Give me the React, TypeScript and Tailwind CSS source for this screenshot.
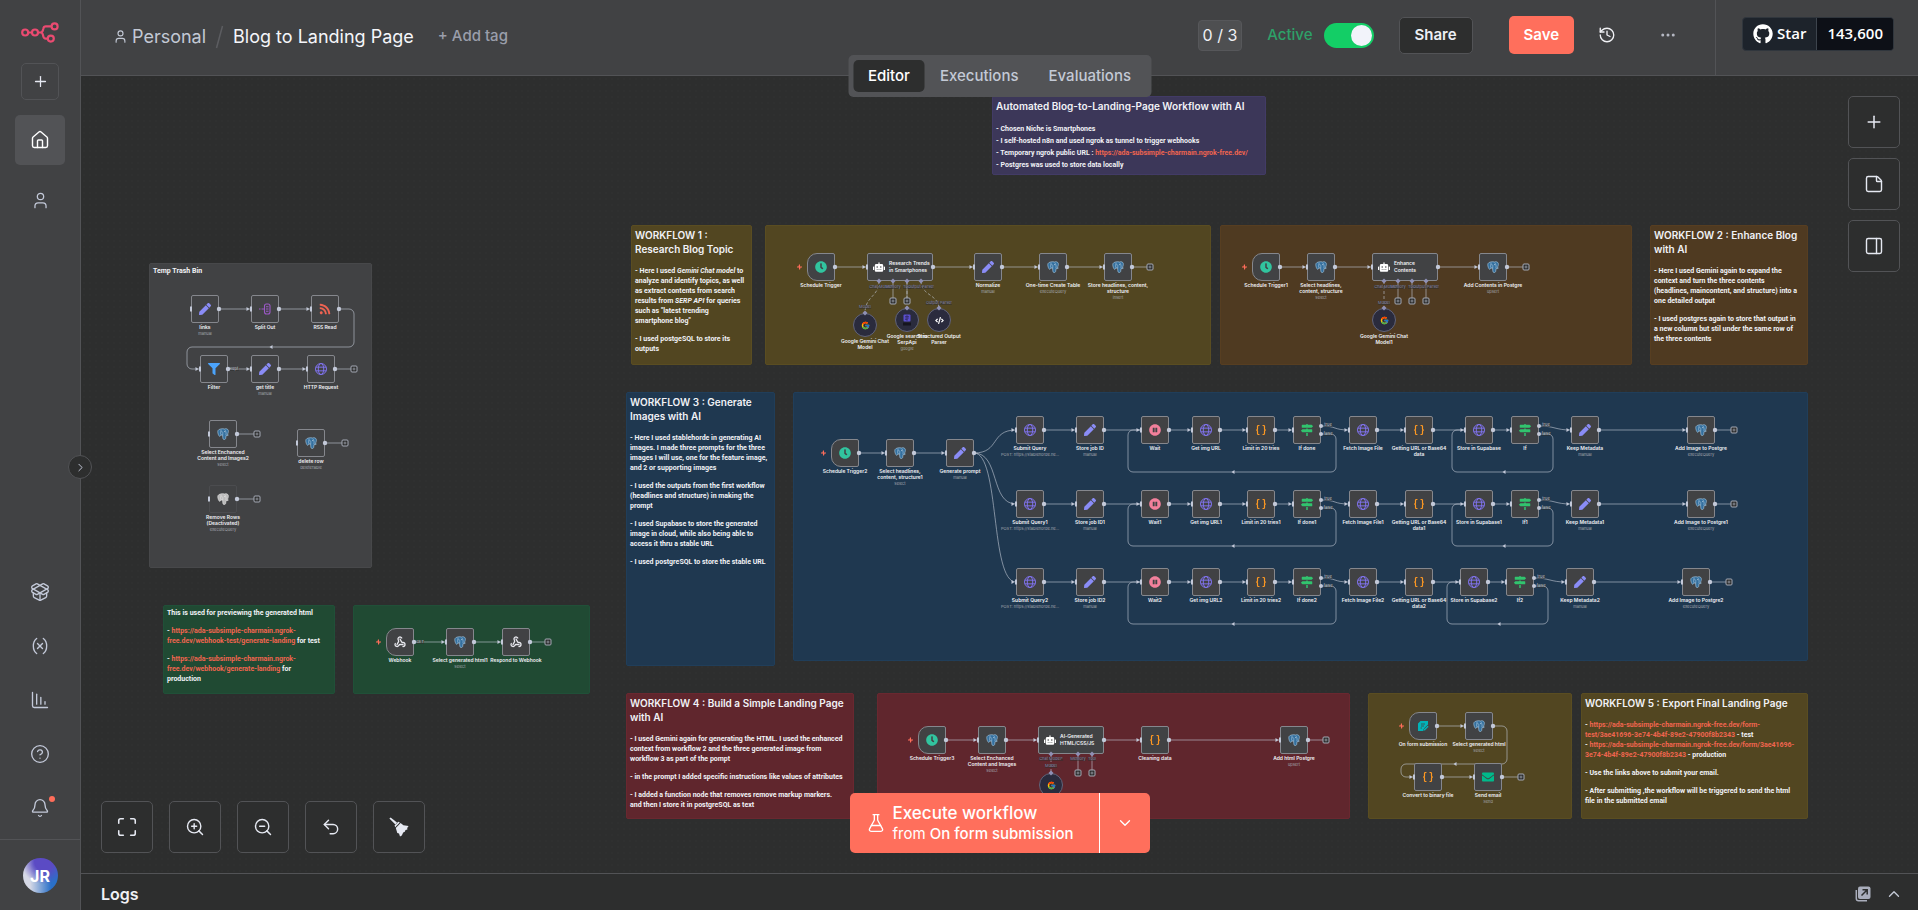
import React from "react";
import {
  Bell, ChartColumnDecreasing, ChevronDown, ChevronRight, ChevronUp, CircleQuestionMark, Ellipsis,
  FlaskConical, History, House, Maximize, PackageOpen, PanelRight, Plus, StickyNote, Undo2, User,
  Variable, Webhook, ZoomIn, ZoomOut, Braces,
} from "lucide-react";
import { FaClock, FaCode, FaEnvelope, FaFilter, FaGithub, FaMapSigns, FaPauseCircle, FaPen, FaRobot, FaRss } from "react-icons/fa";
import { FcGoogle } from "react-icons/fc";

/* ---------- icons drawn by hand ---------- */

function N8nLogo() {
  return (
    <svg width="38" height="22" viewBox="0 0 38 22" fill="none" stroke="#ea4b71" strokeWidth="2.2" aria-hidden="true">
      <circle cx="4.2" cy="10.5" r="3" />
      <circle cx="14" cy="10.5" r="3" />
      <circle cx="33.6" cy="4.4" r="3" />
      <circle cx="29.8" cy="16.6" r="3" />
      <path d="M7.2 10.5h3.8M17 10.5h2.4c1.6 0 2.2-.8 2.5-2.2l.4-1.6c.3-1.500 1-2.300 2.500-2.300h5.800M19.400 10.500c1.600 0 2.200.9 2.500 2.200l.4 1.700c.3 1.500 1 2.200 2.500 2.200h2" />
    </svg>
  );
}

function Broom() {
  return (
    <svg width="20" height="20" viewBox="0 0 20 20" fill="#e6e9f2" aria-hidden="true">
      <path d="M0.400 1.600 1.600.4 8 5.600 6.400 7.400z" />
      <path d="M5.600 8.600 9.200 4.800l1.600.6-4.600 4.800z" />
      <path d="M6.800 11 11.600 6l2.800 2.200 5.200.9-1.400 2 .2 1.300-1.900.6-.7 1.800-1.600.7-1.400 3-1.800 1-1-3-1.700-.4z" />
    </svg>
  );
}

function PopOut() {
  return (
    <svg width="16" height="16" viewBox="0 0 16 16" aria-hidden="true">
      <path d="M1.300 4v8.400c0 1.300.9 2.300 2.300 2.300H12" fill="none" stroke="#a9adbb" strokeWidth="1.500" />
      <rect x="3" y="0.500" width="12.500" height="12.500" rx="2" fill="#a9adbb" />
      <path d="M6.500 9.500 12 4M7.500 3.700H12.200V8.500" fill="none" stroke="#2d2e2e" strokeWidth="1.500" />
    </svg>
  );
}

function Elephant({ off }: { off?: boolean }) {
  const body = off ? "#b9b9b9" : "#336f9e";
  const line = off ? "#e4e4e4" : "#a9c6dd";
  return (
    <svg width="12" height="12" viewBox="0 0 24 24" fill="none" stroke={line} strokeWidth="1.300" strokeLinejoin="round">
      <path d="M3.500 3.500C1 5 1.200 8.500 2.500 12.500s3 5 4.200 3.500l1.600-2 3 .4c.3 2.600-.1 5.600.8 7.400 1.300 2 4.600 1.500 5.200-.8.500-2 .3-4 .6-5.700 2 .3 3.800-.1 4.800-1.200l-2.200-.6c1.800-3 2.700-6.500 2-9C21.500 1.500 17.500.800 14.800 2 11 .8 6 1.800 3.500 3.500z" fill={body} />
      <path d="M8.300 14c-1.600-2.600-1.500-6 .2-10.500M15.500 3.500c2.300 2.500 3.300 6.500 2.300 10.300M11.400 14.400c-.2-2.500.6-4 .2-6" />
      <path d="M9 7.500h1.600M14.500 7.200h1.600" stroke="#ffffff" />
    </svg>
  );
}

function GlobeGrid() {
  return (
    <svg width="12" height="12" viewBox="0 0 24 24" fill="none" stroke="#8073ee" strokeWidth="2">
      <circle cx="12" cy="12" r="11" />
      <ellipse cx="12" cy="12" rx="5.500" ry="11" />
      <path d="M1.500 8.300h21M1.500 15.700h21" />
    </svg>
  );
}

function SplitOut() {
  return (
    <svg width="12" height="12" viewBox="0 0 24 24" fill="none" stroke="#9b59c6" strokeWidth="2.200">
      <path d="M0 12h3M5 12h5" />
      <rect x="11" y="2" width="11" height="20" rx="4" />
      <path d="M14 7.500h5M14 12h5M14 16.500h5" />
    </svg>
  );
}

function FormDoc() {
  return (
    <svg width="12" height="12" viewBox="0 0 24 24">
      <path d="M7 2h15v7l-7 7v3l-2 3H2V7z" fill="#00b3b8" />
      <path d="M8 8h8M8 12h6M7 16h3" stroke="#414244" strokeWidth="1.600" />
      <path d="m13 19 8-8 2.500 2.500-8 8h-2.500z" fill="#00b3b8" stroke="#414244" strokeWidth="1" />
    </svg>
  );
}

function Serp() {
  return (
    <svg width="12" height="12" viewBox="0 0 24 24">
      <rect x="5" y="1" width="14" height="14" rx="2" fill="#5a4fcf" />
      <path d="M8 5h8M8 8h8M8 11h5M12 2v12" stroke="#2a2450" strokeWidth="1.200" />
      <rect x="4" y="17" width="16" height="6" fill="#15151f" />
    </svg>
  );
}

type IconName =
  | "pen" | "split" | "rss" | "filter" | "globe" | "pg" | "pgOff" | "clock" | "robot" | "google" | "serp"
  | "code" | "braces" | "if" | "pause" | "form" | "mail" | "hook";

const ICONS: Record<IconName, React.ReactNode> = {
  pen: <FaPen className="size-3 text-[#8a8cf6]" />,
  split: <SplitOut />,
  rss: <FaRss className="size-3 text-[#ee6352]" />,
  filter: <FaFilter className="size-3 text-[#4ba3fb]" />,
  globe: <GlobeGrid />,
  pg: <Elephant />,
  pgOff: <Elephant off />,
  clock: <FaClock className="size-3 text-[#31c49f]" />,
  robot: <FaRobot className="size-3 shrink-0 text-white" />,
  google: <FcGoogle className="size-[9px]" />,
  serp: <Serp />,
  code: <FaCode className="size-[9px] text-white" />,
  braces: <Braces className="size-3 text-[#ff9922]" strokeWidth={2.4} />,
  if: <FaMapSigns className="size-3 text-[#31c46e]" />,
  pause: <FaPauseCircle className="size-3 text-[#f2809b]" />,
  form: <FormDoc />,
  mail: <FaEnvelope className="size-3 text-[#00b98b]" />,
  hook: <Webhook className="size-3 text-[#e8e8ee]" strokeWidth={2.6} />,
};

/* ---------- workflow data, in canvas units ---------- */

type Kind = "node" | "trigger" | "agent" | "model";
type FlowNode = { x: number; y: number; icon: IconName; label: string; sub?: string; kind?: Kind; w?: number };

const half = (n: FlowNode) => (n.w ?? 28) / 2;

const imageRow = (y: number, n: string, shift: number): FlowNode[] => [
  { x: 1030, y, icon: "globe", label: "Submit Query" + n, sub: "POST: https://stablehorde.ne..." },
  { x: 1090, y, icon: "pen", label: "Store job ID" + n, sub: "manual" },
  { x: 1155, y, icon: "pause", label: "Wait" + n },
  { x: 1206, y, icon: "globe", label: "Get img URL" + n },
  { x: 1261, y, icon: "braces", label: "Limit in 20 tries" + n },
  { x: 1307, y, icon: "if", label: "If done" + n },
  { x: 1363, y, icon: "globe", label: "Fetch Image File" + n },
  { x: 1419, y, icon: "braces", label: "Getting URL or Base64\ndata" + n },
  { x: 1479 - shift, y, icon: "globe", label: "Store in Supabase" + n },
  { x: 1525 - shift, y, icon: "if", label: "If" + n },
  { x: 1585 - shift, y, icon: "pen", label: "Keep Metadata" + n, sub: "manual" },
  { x: 1701 - shift, y, icon: "pg", label: "Add Image to Postgre" + n, sub: "executeQuery" },
];

const CHAINS: { nodes: FlowNode[]; lone?: boolean; plus?: number }[] = [
  { lone: true, nodes: [
    { x: 205, y: 309, icon: "pen", label: "links", sub: "manual" },
    { x: 265, y: 309, icon: "split", label: "Split Out" },
    { x: 325, y: 309, icon: "rss", label: "RSS Read" },
  ] },
  { plus: 354, nodes: [
    { x: 214, y: 369, icon: "filter", label: "Filter" },
    { x: 265, y: 369, icon: "pen", label: "get title", sub: "manual" },
    { x: 321, y: 369, icon: "globe", label: "HTTP Request" },
  ] },
  { lone: true, plus: 257, nodes: [{ x: 223, y: 434, icon: "pg", label: "Select Enchanced\nContent and Images2", sub: "select" }] },
  { lone: true, plus: 345, nodes: [{ x: 311, y: 443, icon: "pg", label: "delete row", sub: "deleteTable" }] },
  { lone: true, plus: 257, nodes: [{ x: 223, y: 499, icon: "pgOff", label: "Remove Rows\n(Deactivated)", sub: "executeQuery" }] },
  { plus: 548, nodes: [
    { x: 400, y: 642, icon: "hook", label: "Webhook", kind: "trigger" },
    { x: 460, y: 642, icon: "pg", label: "Select generated html1", sub: "select" },
    { x: 516, y: 642, icon: "hook", label: "Respond to Webhook" },
  ] },
  { plus: 1150, nodes: [
    { x: 821, y: 267, icon: "clock", label: "Schedule Trigger", kind: "trigger" },
    { x: 900, y: 267, icon: "robot", label: "Research Trends\nin Smartphones", kind: "agent", w: 66 },
    { x: 988, y: 267, icon: "pen", label: "Normalize", sub: "manual" },
    { x: 1053, y: 267, icon: "pg", label: "One-time Create Table", sub: "executeQuery" },
    { x: 1118, y: 267, icon: "pg", label: "Store headlines, content,\nstructure", sub: "insert" },
  ] },
  { plus: 1526, nodes: [
    { x: 1266, y: 267, icon: "clock", label: "Schedule Trigger1", kind: "trigger" },
    { x: 1321, y: 267, icon: "pg", label: "Select headlines,\ncontent, structure", sub: "select" },
    { x: 1405, y: 267, icon: "robot", label: "Enhance\nContents", kind: "agent", w: 66 },
    { x: 1493, y: 267, icon: "pg", label: "Add Contents in Postgre", sub: "upsert" },
  ] },
  { nodes: [
    { x: 845, y: 453, icon: "clock", label: "Schedule Trigger2", kind: "trigger" },
    { x: 900, y: 453, icon: "pg", label: "Select headlines,\ncontent, structure1", sub: "select" },
    { x: 960, y: 453, icon: "pen", label: "Generate prompt", sub: "manual" },
  ] },
  { plus: 1734, nodes: imageRow(430, "", 0) },
  { plus: 1734, nodes: imageRow(504, "1", 0) },
  { plus: 1729, nodes: imageRow(582, "2", 5) },
  { plus: 1326, nodes: [
    { x: 932, y: 740, icon: "clock", label: "Schedule Trigger3", kind: "trigger" },
    { x: 992, y: 740, icon: "pg", label: "Select Enchanced\nContent and Images", sub: "select" },
    { x: 1071, y: 740, icon: "robot", label: "AI-Generated\nHTML/CSS/JS", kind: "agent", w: 66 },
    { x: 1155, y: 740, icon: "braces", label: "Cleaning data" },
    { x: 1294, y: 740, icon: "pg", label: "Add html Postgre", sub: "upsert" },
  ] },
  { nodes: [
    { x: 1423, y: 726, icon: "form", label: "On form submission", kind: "trigger" },
    { x: 1479, y: 726, icon: "pg", label: "Select generated html", sub: "select" },
  ] },
  { plus: 1521, nodes: [
    { x: 1428, y: 777, icon: "braces", label: "Convert to binary file" },
    { x: 1488, y: 777, icon: "mail", label: "Send email", sub: "Send" },
  ] },
];

const ROWS: [number, number][] = [[430, 0], [504, 0], [582, 5]];

const MODELS: FlowNode[] = [
  { x: 865, y: 325, icon: "google", label: "Google Gemini Chat\nModel", kind: "model" },
  { x: 907, y: 320, icon: "serp", label: "Google search in\nSerpApi", sub: "google", kind: "model" },
  { x: 939, y: 320, icon: "code", label: "Structured Output\nParser", kind: "model" },
  { x: 1384, y: 320, icon: "google", label: "Google Gemini Chat\nModel1", kind: "model" },
  { x: 1051, y: 785, icon: "google", label: "", kind: "model" },
];

const PORTS: [number, number][] = [
  [879, 281], [893, 281], [907, 281], [921, 281],
  [1384, 281], [1398, 281], [1412, 281], [1426, 281],
  [1051, 754], [1078, 754], [1092, 754],
];
const SUB_PLUS: [number, number, number][] = [
  [893, 281, 301], [907, 281, 301],
  [1398, 281, 301], [1412, 281, 301], [1426, 281, 301],
  [1078, 754, 773], [1092, 754, 773],
];
const TAGS: [number, number, string][] = [
  [881, 287, "Chat Model*"], [893, 287, "Memory"], [907, 287, "Tool"], [921, 287, "Output Parser"],
  [865, 307, "Model"], [939, 303, "Output Parser"],
  [1386, 287, "Chat Model*"], [1398, 287, "Memory"], [1412, 287, "Tool"], [1426, 287, "Output Parser"],
  [1384, 303, "Model"],
  [1051, 759, "Chat Model*"], [1078, 759, "Memory"], [1092, 759, "Tool"], [1051, 766, "Model"],
];
const LOOPS: { d: string; mid: [number, number] }[] = [
  { d: "M339 309H349a5 5 0 0 1 5 5V342a5 5 0 0 1-5 5H192a5 5 0 0 0-5 5V364a5 5 0 0 0 5 5H200", mid: [271, 347] },
  { d: "M1493 726H1502a5 5 0 0 1 5 5V759a5 5 0 0 1-5 5H1406a5 5 0 0 0-5 5V772a5 5 0 0 0 5 5H1414", mid: [1455, 764] },
  ...ROWS.flatMap(([y, s]) => [
    { d: `M1321 ${y + 4}H1331a5 5 0 0 1 5 5V${y + 37}a5 5 0 0 1-5 5H1133a5 5 0 0 1-5-5V${y + 5}a5 5 0 0 1 5-5H1141`, mid: [1233, y + 42] as [number, number] },
    { d: `M${1539 - s} ${y + 4}H${1548 - s}a5 5 0 0 1 5 5V${y + 37}a5 5 0 0 1-5 5H${1457 - s}a5 5 0 0 1-5-5V${y + 5}a5 5 0 0 1 5-5H${1465 - s}`, mid: [1504 - s, y + 42] as [number, number] },
  ]),
];

/* ---------- canvas parts ---------- */

function InputHandle({ x, y, arrow }: { x: number; y: number; arrow: boolean }) {
  return (
    <g fill="#c3c9d9">
      {arrow && <path d={`M${x - 4.5} ${y - 2}l3 2l-3 2z`} />}
      <rect x={x - 1} y={y - 2.5} width="2" height="5" />
    </g>
  );
}

function PlusBox({ x, y }: { x: number; y: number }) {
  return (
    <g stroke="#a6aab6" fill="#2d2e2e">
      <rect x={x - 3} y={y - 3} width="6" height="6" rx="1" strokeWidth="1" />
      <path d={`M${x - 1.5} ${y}h3M${x} ${y - 1.5}v3`} strokeWidth="0.700" />
    </g>
  );
}

function Wires() {
  return (
    <svg className="absolute inset-0 h-full w-full overflow-visible" aria-hidden="true">
      <g fill="none" stroke="#c3c9d5" strokeOpacity="0.600" strokeWidth="1">
        {CHAINS.map((c, i) =>
          c.nodes.map((a, j) => {
            const b = c.nodes[j + 1];
            const x1 = a.x + half(a);
            if (!b) return c.plus ? <path key={`${i}-${j}`} d={`M${x1} ${a.y}H${c.plus}`} /> : null;
            const x2 = b.x - half(b);
            return a.icon === "if" ? (
              <path key={`${i}-${j}`} d={`M${x1} ${a.y - 4}C${x1 + 16} ${a.y - 4} ${x2 - 16} ${b.y} ${x2} ${b.y}`} />
            ) : (
              <path key={`${i}-${j}`} d={`M${x1} ${a.y}H${x2}`} />
            );
          })
        )}
        {LOOPS.map((l) => <path key={l.d} d={l.d} />)}
        {ROWS.map(([y]) => <path key={y} d={`M974 453C1000 453 990 ${y} 1016 ${y}`} />)}
        {SUB_PLUS.map(([x, y1, y2]) => <path key={`${x}-${y1}`} d={`M${x} ${y1}V${y2}`} />)}
        <g strokeDasharray="3 2">
          <path d="M879 281C879 297 865 296 865 313" />
          <path d="M907 281V309" />
          <path d="M921 281C921 296 939 294 939 309" />
          <path d="M1384 281V309" />
          <path d="M1051 754V774" />
        </g>
      </g>
      {LOOPS.map((l) => (
        <path key={l.d} d={`M${l.mid[0] + 1.5} ${l.mid[1] - 2}l-3 2l3 2z`} fill="#c3c9d9" />
      ))}
    </svg>
  );
}

function Handles() {
  return (
    <svg className="pointer-events-none absolute inset-0 h-full w-full overflow-visible" aria-hidden="true">
      {CHAINS.map((c) =>
        c.nodes.map((n, j) => (
          <g key={`${n.x}-${n.y}`} fill="#c3c9d9">
            {n.kind !== "trigger" && <InputHandle x={n.x - half(n)} y={n.y} arrow={!(c.lone && j === 0)} />}
            {n.icon === "if" ? (
              <>
                <circle cx={n.x + half(n)} cy={n.y - 4} r="2" />
                <circle cx={n.x + half(n)} cy={n.y + 4} r="2" />
              </>
            ) : (
              <circle cx={n.x + half(n)} cy={n.y} r="2.200" />
            )}
            {n.kind === "trigger" && (
              <path d={`M${n.x - 21} ${n.y - 2.5}v2h2v1h-1.500l-.5 2h-1v-2h-2v-1h1.500l.5-2z`} fill="#ff6d5a" />
            )}
          </g>
        ))
      )}
      {CHAINS.map((c, i) => (c.plus ? <PlusBox key={i} x={c.plus} y={c.nodes[0].y} /> : null))}
      {SUB_PLUS.map(([x, , y]) => <PlusBox key={`${x}-${y}`} x={x} y={y} />)}
      {[...PORTS, ...MODELS.map((m) => [m.x, m.y - 12] as [number, number])].map(([x, y]) => (
        <path key={`${x}-${y}`} d={`M${x} ${y - 2.5}l2.500 2.500l-2.500 2.500l-2.500-2.500z`} fill="#8f90b5" />
      ))}
    </svg>
  );
}

function Label({ n }: { n: FlowNode }) {
  return (
    <div className="absolute top-full left-1/2 flex -translate-x-1/2 flex-col items-center pt-[2px] text-center whitespace-pre">
      <span className="text-[5px] leading-[6px] font-semibold text-[#f0f1f5]">{n.label}</span>
      {n.sub && <span className="text-[4px] leading-[7px] text-[#a3a6ae]">{n.sub}</span>}
    </div>
  );
}

function NodeCard({ n }: { n: FlowNode }) {
  const w = n.kind === "model" ? 24 : n.w ?? 28;
  const h = n.kind === "model" ? 24 : 28;
  const pos = { left: n.x - w / 2, top: n.y - h / 2, width: w, height: h };
  if (n.kind === "agent")
    return (
      <div className="absolute flex items-center gap-1 rounded-[2px] border border-[#85878d] bg-[#414244] pl-[5px]" style={pos}>
        {ICONS[n.icon]}
        <span className="text-[5px] leading-[7px] font-semibold whitespace-pre text-[#f0f1f5]">{n.label}</span>
      </div>
    );
  const shape =
    n.kind === "model"
      ? "rounded-full border-[#62647a] bg-[#2a2b3d]"
      : n.kind === "trigger"
        ? "rounded-l-[10px] rounded-r-[2px] border-[#85878d] bg-[#414244]"
        : n.icon === "pgOff"
          ? "rounded-[2px] border-[#4b4c4f] bg-[#414244]"
          : "rounded-[2px] border-[#85878d] bg-[#414244]";
  return (
    <div className={"absolute flex items-center justify-center border " + shape} style={pos}>
      {ICONS[n.icon]}
      <Label n={n} />
    </div>
  );
}

function A({ lines }: { lines: string[] }) {
  return (
    <a href={lines.join("")} className="text-[#f0654f]">
      {lines.map((l, i) => (
        <React.Fragment key={l}>{i > 0 && <br />}{l}</React.Fragment>
      ))}
    </a>
  );
}

type NoteProps = { x: number; y: number; w: number; h: number; tone: string; title?: string; children?: React.ReactNode };

function Note({ x, y, w, h, tone, title, children }: NoteProps) {
  return (
    <section
      className={"absolute flex flex-col gap-2 rounded-[2px] border px-[3px] pt-[2px] font-['Roboto','Inter',sans-serif] text-[7px] leading-[10px] font-bold whitespace-nowrap text-[#f1f2f6] " + tone}
      style={{ left: x, top: y, width: w, height: h }}
    >
      {title && <h2 className="mb-[2px] font-['Inter',sans-serif] text-[10px] leading-[14px] font-semibold whitespace-pre">{title}</h2>}
      {children}
    </section>
  );
}

const OLIVE = "bg-[#524621] border-[#5a4d21]";
const BROWN = "bg-[#4f3a21] border-[#573e21]";
const NAVY = "bg-[#1f3850] border-[#203e5a]";
const WINE = "bg-[#60262d] border-[#6a2830]";
const GREEN = "bg-[#204a33] border-[#205038]";
const VIOLET = "bg-[#3c3759] border-[#423b66]";
const GREY = "bg-[#414244] border-[#47484a]";

function Notes() {
  return (
    <>
      <Note x={992} y={96} w={274} h={79} tone={VIOLET} title="Automated Blog-to-Landing-Page Workflow with AI">
        <p className="leading-[12px]">
          - Chosen Niche is Smartphones<br />
          - I self-hosted n8n and used ngrok as tunnel to trigger webhooks<br />
          - Temporary ngrok public URL : <A lines={["https://ada-subsimple-charmain.ngrok-free.dev/"]} /><br />
          - Postgres was used to store data locally
        </p>
      </Note>

      <Note x={149} y={263} w={223} h={305} tone={GREY}><p>Temp Trash Bin</p></Note>

      <Note x={631} y={225} w={121} h={140} tone={OLIVE} title={"WORKFLOW 1 :\nResearch Blog Topic"}>
        <p>- Here I used <em>Gemini Chat model</em> to<br />analyze and identify topics, as well<br />as extract contents from search<br />results from <em>SERP API</em> for queries<br />such as "latest trending<br />smartphone blog"</p>
        <p>- I used postgeSQL to store its<br />outputs</p>
      </Note>
      <Note x={765} y={225} w={446} h={140} tone={OLIVE} />
      <Note x={1220} y={225} w={412} h={140} tone={BROWN} />
      <Note x={1650} y={225} w={158} h={140} tone={BROWN} title={"WORKFLOW 2 : Enhance Blog\nwith AI"}>
        <p>- Here I used Gemini again to expand the<br />context and turn the three contents<br />(headlines, maincontent, and structure) into a<br />one detailed output</p>
        <p>- I used postgres again to store that output in<br />a new column but stil under the same row of<br />the three contents</p>
      </Note>

      <Note x={626} y={392} w={149} h={274} tone={NAVY} title={"WORKFLOW 3 : Generate\nImages with AI"}>
        <p>- Here I used stablehorde in generating AI<br />images. I made three prompts for the three<br />images I will use, one for the feature image,<br />and 2 or supporting images</p>
        <p>- I used the outputs from the first workflow<br />(headlines and structure) in making the<br />prompt</p>
        <p>- I used Supabase to store the generated<br />image in cloud, while also being able to<br />access it thru a stable URL</p>
        <p>- I used postgreSQL to store the stable URL</p>
      </Note>
      <Note x={793} y={392} w={1015} h={269} tone={NAVY} />

      <Note x={163} y={605} w={172} h={89} tone={GREEN}>
        <p>This is used for previewing the generated html</p>
        <p>- <A lines={["https://ada-subsimple-charmain.ngrok-", "free.dev/webhook-test/generate-landing"]} /> for test</p>
        <p>- <A lines={["https://ada-subsimple-charmain.ngrok-", "free.dev/webhook/generate-landing"]} /> for<br />production</p>
      </Note>
      <Note x={353} y={605} w={237} h={89} tone={GREEN} />

      <Note x={626} y={693} w={228} h={126} tone={WINE} title={"WORKFLOW 4 : Build a Simple Landing Page\nwith AI"}>
        <p>- I used Gemini again for generating the HTML. I used the enhanced<br />context from workflow 2 and the three generated image from<br />workflow 3 as part of the pompt</p>
        <p>- in the prompt I added specific instructions like values of attributes</p>
        <p>- I added a function node that removes remove markup markers.<br />and then I store it in postgreSQL as text</p>
      </Note>
      <Note x={877} y={693} w={473} h={126} tone={WINE} />

      <Note x={1368} y={693} w={204} h={126} tone={OLIVE} />
      <Note x={1581} y={693} w={227} h={126} tone={OLIVE} title="WORKFLOW 5 : Export Final Landing Page">
        <p>- <A lines={["https://ada-subsimple-charmain.ngrok-free.dev/form-", "test/3ae41696-3e74-4b4f-89e2-47900f8b2343"]} /> - test<br />- <A lines={["https://ada-subsimple-charmain.ngrok-free.dev/form/3ae41696-", "3e74-4b4f-89e2-47900f8b2343"]} /> - production</p>
        <p>- Use the links above to submit your email.</p>
        <p>- After submitting ,the workflow will be triggered to send the html<br />file in the submitted email</p>
      </Note>
    </>
  );
}

const WIRE_LABELS: [number, number, string][] = [
  [234, 369, "Kept"], [420, 642, "GET"],
  ...ROWS.flatMap(([y, s]) => [
    [1328, y - 5, "true"], [1328, y + 4, "false"], [1546 - s, y - 5, "true"], [1546 - s, y + 4, "false"],
  ] as [number, number, string][]),
];

function Canvas() {
  return (
    <div className="absolute -top-[76px] -left-[81px] h-[910px] w-[1918px]">
      <Notes />
      <Wires />
      {[...CHAINS.flatMap((c) => c.nodes), ...MODELS].map((n) => <NodeCard key={`${n.x}-${n.y}`} n={n} />)}
      {TAGS.map(([x, y, t]) => (
        <span key={`${x}-${y}`} className="absolute -translate-x-1/2 -translate-y-1/2 bg-[#2d2e2e]/50 text-[4px] leading-[4px] whitespace-nowrap text-[#8788a8]" style={{ left: x, top: y }}>{t}</span>
      ))}
      {WIRE_LABELS.map(([x, y, t]) => (
        <span key={`${x}-${y}`} className="absolute -translate-x-1/2 -translate-y-1/2 bg-[#2d2e2e]/50 text-[4px] leading-[4px] text-[#c3c9d5]" style={{ left: x, top: y }}>{t}</span>
      ))}
      <Handles />
    </div>
  );
}

/* ---------- application frame ---------- */

function RailButton({ label, active, dot, children }: { label: string; active?: boolean; dot?: boolean; children: React.ReactNode }) {
  return (
    <button aria-label={label} className={"relative flex h-[50px] w-[50px] items-center justify-center rounded-[5px] " + (active ? "bg-[#525356] text-white" : "text-[#c3c9d9]")}>
      {children}
      {dot && <span className="absolute top-[13px] right-[10px] size-[6px] rounded-full bg-[#ff6d5a]" />}
    </button>
  );
}

function Sidebar() {
  return (
    <aside className="relative flex w-[81px] shrink-0 flex-col items-center border-r border-[#525356] bg-[#414244] pt-[22px]">
      <N8nLogo />
      <button aria-label="Create" className="mt-[19px] flex h-[37px] w-[38px] items-center justify-center rounded-[5px] border border-[#525356] text-[#e6e9f2]">
        <Plus size={17} strokeWidth={1.8} />
      </button>
      <nav className="mt-[15px] flex flex-1 flex-col items-center gap-[10px]">
        <RailButton label="Overview" active><House size={20} strokeWidth={1.7} /></RailButton>
        <RailButton label="Personal"><User size={19} strokeWidth={1.6} /></RailButton>
        <div className="mt-auto flex flex-col items-center gap-1 pb-[6px]">
          <RailButton label="Templates"><PackageOpen size={20} strokeWidth={1.6} /></RailButton>
          <RailButton label="Variables"><Variable size={20} strokeWidth={1.6} /></RailButton>
          <RailButton label="Insights"><ChartColumnDecreasing size={20} strokeWidth={1.6} /></RailButton>
          <RailButton label="Help"><CircleQuestionMark size={20} strokeWidth={1.6} /></RailButton>
          <RailButton label="What's new" dot><Bell size={20} strokeWidth={1.6} /></RailButton>
        </div>
      </nav>
      <div className="flex w-full justify-center border-t border-[#525356] pt-[18px] pb-[17px]">
        <button className="size-[35px] rounded-full bg-[radial-gradient(circle_at_60%_10%,#5b4bc4_0%,#5b4bc4_25%,transparent_60%),linear-gradient(90deg,#d6d9e6_20%,#2a70c8_80%)] text-[16px] font-bold text-white">JR</button>
      </div>
      <button aria-label="Expand sidebar" className="absolute top-[455px] -right-[12px] z-20 flex size-[24px] items-center justify-center rounded-full border border-[#525356] bg-[#2d2e2e] text-[#c3c9d9]">
        <ChevronRight size={13} strokeWidth={1.8} />
      </button>
    </aside>
  );
}

function Header() {
  return (
    <header className="flex h-[76px] shrink-0 items-stretch border-b border-[#525356] bg-[#414244]">
      <div className="flex min-w-0 flex-1 items-center pb-[2px] pl-8">
        <a href="#personal" className="flex items-center gap-1 text-[18px] text-[#c3c9d5]">
          <User size={15} strokeWidth={1.8} />Personal
        </a>
        <svg width="9" height="24" viewBox="0 0 9 24" className="mx-[9px]" aria-hidden="true"><path d="M7.500 1 1.500 23" stroke="#5c5d61" strokeWidth="1.500" /></svg>
        <h1 className="text-[18px] text-[#f5f6fa]">Blog to Landing Page</h1>
        <button className="ml-6 text-[15px] font-medium text-[#9a9eab]">+ Add tag</button>
      </div>
      <div className="flex items-center pr-[38px] pb-[5px]">
        <span className="rounded-[4px] border border-[#56575a] bg-[#4e4f51] px-1 py-[3px] text-[16px] leading-[23px] text-[#f0f1f5]">0 / 3</span>
        <label htmlFor="active" className="mr-[11px] ml-[25px] text-[15px] font-medium text-[#2ea068]">Active</label>
        <span className="relative mr-[25px] h-[25px] w-[50px]">
          <input id="active" type="checkbox" role="switch" defaultChecked className="peer absolute inset-0 h-full w-full appearance-none rounded-full bg-[#8a8c92] checked:bg-[#13ce66]" />
          <span className="pointer-events-none absolute top-[2px] right-[2px] size-[21px] rounded-full bg-[#f2f3fa]" />
        </span>
        <button className="h-[37px] rounded-[5px] border border-[#525356] bg-[#2d2e2e] px-[15px] text-[15px] font-semibold text-[#eceef4]">Share</button>
        <button className="ml-9 h-[38px] rounded-[5px] bg-[#ff6f5c] px-[15px] text-[15px] font-semibold text-white">Save</button>
        <button aria-label="Workflow history" className="ml-6 text-[#f0f1f5]"><History size={18} strokeWidth={1.8} /></button>
        <button aria-label="More actions" className="ml-[43px] text-[#b4b7c2]"><Ellipsis size={18} strokeWidth={2} /></button>
      </div>
      <div className="flex items-center border-l border-[#525356] pr-6 pb-[8px] pl-[26px]">
        <a href="#star" className="flex h-[34px] items-center overflow-hidden rounded-[4px] border border-[#30363d] bg-[#1d232b] font-['Open_Sans','Noto_Sans',sans-serif] text-[15px] font-semibold text-white">
          <span className="flex h-full items-center gap-1 border-r border-[#3d444d] px-[10px]"><FaGithub size={20} />Star</span>
          <span className="flex h-full items-center bg-[#0d1017] px-[10px]">143,600</span>
        </a>
      </div>
    </header>
  );
}

function Tool({ label, children }: { label: string; children: React.ReactNode }) {
  return (
    <button aria-label={label} className="flex size-[52px] items-center justify-center rounded-[5px] border border-[#525356] bg-[#2d2e2e] text-[#e6e9f2]">
      {children}
    </button>
  );
}

export default function App() {
  return (
    <div className="flex h-screen overflow-hidden bg-[#2d2e2e] font-['Inter',sans-serif] text-[#f0f1f5]">
      <Sidebar />
      <div className="relative flex min-w-0 flex-1 flex-col">
        <Header />
        <div role="tablist" className="absolute top-[55px] left-1/2 z-20 flex h-[42px] -translate-x-1/2 items-center rounded-[5px] bg-[#525356] p-[5px] text-[15px] font-medium text-[#c3c9d5]">
          <button role="tab" aria-selected="true" className="h-full rounded-[5px] bg-[#2d2e2e] px-[15px] text-white">Editor</button>
          <button role="tab" aria-selected="false" className="h-full px-[15px]">Executions</button>
          <button role="tab" aria-selected="false" className="h-full px-[15px]">Evaluations</button>
        </div>

        <main className="relative flex-1 overflow-hidden bg-[radial-gradient(circle,#2f3030_1px,transparent_1px)] bg-[size:6px_6px]">
          <Canvas />

          <div className="absolute top-5 right-[18px] flex flex-col gap-[10px]">
            <Tool label="Add node"><Plus size={20} strokeWidth={1.8} /></Tool>
            <Tool label="Add sticky note"><StickyNote size={20} strokeWidth={1.7} /></Tool>
            <Tool label="Toggle panel"><PanelRight size={20} strokeWidth={1.7} /></Tool>
          </div>

          <div className="absolute bottom-5 left-5 flex gap-4">
            <Tool label="Fit view"><Maximize size={22} strokeWidth={1.7} /></Tool>
            <Tool label="Zoom in"><ZoomIn size={20} strokeWidth={1.7} /></Tool>
            <Tool label="Zoom out"><ZoomOut size={20} strokeWidth={1.7} /></Tool>
            <Tool label="Undo"><Undo2 size={20} strokeWidth={1.7} /></Tool>
            <Tool label="Tidy up"><Broom /></Tool>
          </div>

          <div className="absolute bottom-5 left-1/2 flex h-[60px] -translate-x-1/2 overflow-hidden rounded-[5px] bg-[#ff6f5c] text-white">
            <button className="flex items-center gap-[7px] border-r border-white pr-[25px] pl-4 text-left">
              <FlaskConical size={20} strokeWidth={1.6} />
              <span className="flex flex-col">
                <span className="text-[17px] leading-[21px] font-medium">Execute workflow</span>
                <span className="text-[15px] leading-[20px]">from <b className="font-medium">On form submission</b></span>
              </span>
            </button>
            <button aria-label="Choose trigger" className="flex w-[50px] items-center justify-center"><ChevronDown size={18} strokeWidth={1.8} /></button>
          </div>
        </main>

        <footer className="flex h-[37px] shrink-0 items-center border-t border-[#525356] bg-[#2d2e2e] pr-[15px] pl-5">
          <h2 className="flex-1 pt-1 text-[16px] font-semibold">Logs</h2>
          <button aria-label="Pop out logs" className="pt-1"><PopOut /></button>
          <button aria-label="Open logs" className="ml-[14px] pt-1 text-[#c3c9d5]"><ChevronUp size={18} strokeWidth={1.8} /></button>
        </footer>
      </div>
    </div>
  );
}
